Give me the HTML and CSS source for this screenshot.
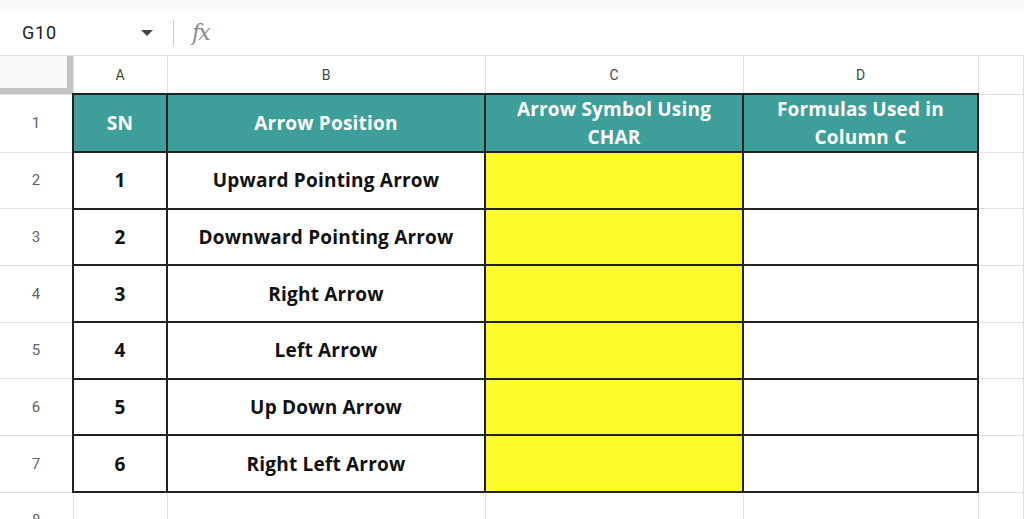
FILE: index.html
```html
<!DOCTYPE html>
<html lang="en">
<head>
  <meta charset="UTF-8">
  <title>Arrow Symbols - Sheet</title>
  <link rel="stylesheet" href="styles.css">
</head>
<body>
  <div class="top-strip"></div>

  <div class="formula-bar">
    <div class="name-box">
      <span>G10</span>
      <span class="caret"></span>
    </div>
    <div class="divider"></div>
    <span class="fx">fx</span>
  </div>

  <table class="sheet">
    <colgroup>
      <col class="col-rowhead">
      <col class="col-a">
      <col class="col-b">
      <col class="col-c">
      <col class="col-d">
      <col>
    </colgroup>
    <tr class="col-heads">
      <td class="corner"></td>
      <td>A</td>
      <td>B</td>
      <td>C</td>
      <td>D</td>
      <td></td>
    </tr>
    <tr class="row">
      <td class="row-head">1</td>
      <td class="cell head">SN</td>
      <td class="cell head">Arrow Position</td>
      <td class="cell head">Arrow Symbol Using<br>CHAR</td>
      <td class="cell head">Formulas Used in<br>Column C</td>
      <td></td>
    </tr>
    <tr class="row">
      <td class="row-head">2</td>
      <td class="cell">1</td>
      <td class="cell">Upward Pointing Arrow</td>
      <td class="cell yellow"></td>
      <td class="cell"></td>
      <td></td>
    </tr>
    <tr class="row">
      <td class="row-head">3</td>
      <td class="cell">2</td>
      <td class="cell">Downward Pointing Arrow</td>
      <td class="cell yellow"></td>
      <td class="cell"></td>
      <td></td>
    </tr>
    <tr class="row">
      <td class="row-head">4</td>
      <td class="cell">3</td>
      <td class="cell">Right Arrow</td>
      <td class="cell yellow"></td>
      <td class="cell"></td>
      <td></td>
    </tr>
    <tr class="row">
      <td class="row-head">5</td>
      <td class="cell">4</td>
      <td class="cell">Left Arrow</td>
      <td class="cell yellow"></td>
      <td class="cell"></td>
      <td></td>
    </tr>
    <tr class="row">
      <td class="row-head">6</td>
      <td class="cell">5</td>
      <td class="cell">Up Down Arrow</td>
      <td class="cell yellow"></td>
      <td class="cell"></td>
      <td></td>
    </tr>
    <tr class="row">
      <td class="row-head">7</td>
      <td class="cell">6</td>
      <td class="cell">Right Left Arrow</td>
      <td class="cell yellow"></td>
      <td class="cell"></td>
      <td></td>
    </tr>
    <tr class="row">
      <td class="row-head">8</td>
      <td></td>
      <td></td>
      <td></td>
      <td></td>
      <td></td>
    </tr>
  </table>
</body>
</html>
```

FILE: styles.css
```css
/* page */
body {
  margin: 0;
  font-family: Roboto, "Liberation Sans", Arial, sans-serif;
  color: #202124;
  background: #fff;
  overflow: hidden;
}

.top-strip {
  height: 10px;
  background: #f9fafb;
}

/* formula bar */
.formula-bar {
  display: flex;
  align-items: center;
  height: 45px;
  border-bottom: 1px solid #dadce0;
}

.name-box {
  display: flex;
  align-items: center;
  justify-content: space-between;
  width: 131px;
  padding-left: 22px;
  font-size: 18px;
  letter-spacing: 0.8px;
  color: #202124;
}

.caret {
  width: 0;
  height: 0;
  border-left: 6px solid transparent;
  border-right: 6px solid transparent;
  border-top: 6px solid #444;
}

.divider {
  width: 1px;
  height: 25px;
  margin: 0 18px 0 20px;
  background: #c7c7c7;
}

.fx {
  font-family: "DejaVu Serif", serif;
  font-style: italic;
  font-size: 22px;
  color: #8a8a8a;
  letter-spacing: -2px;
}

/* grid */
.sheet {
  table-layout: fixed;
  border-collapse: collapse;
  width: 1024px;
}

.sheet td {
  border: 1px solid #e1e1e1;
  padding: 0;
  text-align: center;
}

.col-rowhead { width: 73px; }
.col-a { width: 94px; }
.col-b { width: 318px; }
.col-c { width: 258px; }
.col-d { width: 235px; }

.col-heads td {
  height: 37px;
  font-size: 14px;
  color: #444746;
  border-top: none;
}

.col-heads .corner {
  background: #f8f9fa;
  box-shadow: inset -6px -6px 0 #c4c4c4;
  border-left: none;
}

.row td {
  height: 54.7px;
}

.row-head {
  font-size: 15px;
  color: #5f6368;
  border-left: none !important;
}

.cell {
  font-family: "Open Sans", Lato, sans-serif;
  font-weight: 700;
  font-size: 19px;
  line-height: 28px;
  letter-spacing: 0.2px;
  color: #111;
}

.sheet td.cell {
  border: 2px solid #222;
}

.cell.head {
  background: #3d9e9a;
  color: #fff;
}

.cell.yellow {
  background: #fcfc2a;
}
```
